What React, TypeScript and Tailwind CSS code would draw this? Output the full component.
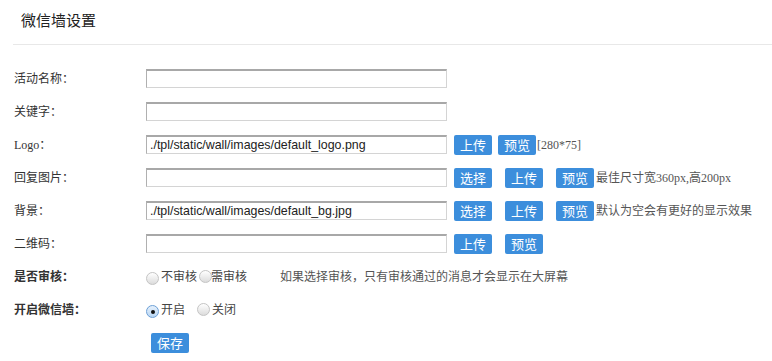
import type { ReactNode } from 'react'

const serif = 'font-["Liberation_Serif","Noto_Sans_CJK_SC",serif]'

function Btn({ children, className = '' }: { children: ReactNode; className?: string }) {
  return (
    <button
      className={`h-[20px] w-[38px] shrink-0 rounded-[2px] bg-[#3c8edc] text-[13px] leading-[20px] text-white font-["Noto_Sans_CJK_SC",sans-serif] ${className}`}
    >
      {children}
    </button>
  )
}

function TextInput({ value = '' }: { value?: string }) {
  return (
    <input
      defaultValue={value}
      className='h-[19px] w-[301px] shrink-0 border border-[#d4d4d4] border-t-2 border-t-[#a8a8a8] border-l-[#b0b0b0] bg-white px-[3px] text-[12.4px] leading-[15px] text-[#222] outline-none font-["Liberation_Sans",sans-serif]'
    />
  )
}

function Radio({ checked = false }: { checked?: boolean }) {
  return (
    <span
      className={`relative mt-[4px] inline-block h-[13px] w-[13px] shrink-0 rounded-full border bg-gradient-to-b ${
        checked ? 'border-[#6c9fd6] from-[#e6f1fc] to-[#b9d6f3]' : 'border-[#c4c4c4] from-[#ffffff] to-[#dcdcdc]'
      }`}
    >
      {checked && <span className="absolute left-[3.5px] top-[3.5px] h-[4px] w-[4px] rounded-full bg-[#111]" />}
    </span>
  )
}

function Row({ label, bold = false, children }: { label: string; bold?: boolean; children: ReactNode }) {
  return (
    <div className="flex h-[33px] items-center">
      <div className={`w-[132px] shrink-0 text-[12px] text-[#333] ${bold ? 'font-bold' : ''}`}>{label}</div>
      <div className="flex items-center">{children}</div>
    </div>
  )
}

export default function App() {
  return (
    <div className={`h-[361px] w-[772px] overflow-hidden bg-white ${serif}`}>
      <div className="flex h-[44px] items-center pl-[21px] pb-[1px] text-[15px] text-[#222]">微信墙设置</div>
      <div className="ml-[13px] h-px bg-[#e8e8e8]" />
      <div className="pl-[14px] pt-[17px]">
        <Row label="活动名称：">
          <TextInput />
        </Row>
        <Row label="关键字：">
          <TextInput />
        </Row>
        <Row label="Logo：">
          <TextInput value="./tpl/static/wall/images/default_logo.png" />
          <Btn className="ml-[7px]">上传</Btn>
          <Btn className="ml-[6px]">预览</Btn>
          <span className="ml-[1px] text-[12px] text-[#555]">[280*75]</span>
        </Row>
        <Row label="回复图片：">
          <TextInput />
          <Btn className="ml-[7px]">选择</Btn>
          <Btn className="ml-[13px]">上传</Btn>
          <Btn className="ml-[13px]">预览</Btn>
          <span className="ml-[2px] text-[12px] text-[#555]">最佳尺寸宽360px,高200px</span>
        </Row>
        <Row label="背景：">
          <TextInput value="./tpl/static/wall/images/default_bg.jpg" />
          <Btn className="ml-[7px]">选择</Btn>
          <Btn className="ml-[13px]">上传</Btn>
          <Btn className="ml-[13px]">预览</Btn>
          <span className="ml-[2px] text-[12px] text-[#555]">默认为空会有更好的显示效果</span>
        </Row>
        <Row label="二维码：">
          <TextInput />
          <Btn className="ml-[7px]">上传</Btn>
          <Btn className="ml-[13px]">预览</Btn>
        </Row>
        <Row label="是否审核：" bold>
          <div className="flex items-center text-[12px] text-[#444]">
            <Radio />
            <span className="ml-[2px]">不审核</span>
            <span className="ml-[2px]">
              <Radio />
            </span>
            <span className="-ml-[1px]">需审核</span>
            <span className="ml-[33px] text-[#555]">如果选择审核，只有审核通过的消息才会显示在大屏幕</span>
          </div>
        </Row>
        <Row label="开启微信墙：" bold>
          <div className="flex items-center text-[12px] text-[#444]">
            <Radio checked />
            <span className="ml-[2px]">开启</span>
            <span className="ml-[12px]">
              <Radio />
            </span>
            <span className="ml-[2px]">关闭</span>
          </div>
        </Row>
        <div className="flex h-[33px] items-center pl-[137px]">
          <Btn className="h-[20px] w-[37px]">保存</Btn>
        </div>
      </div>
    </div>
  )
}
